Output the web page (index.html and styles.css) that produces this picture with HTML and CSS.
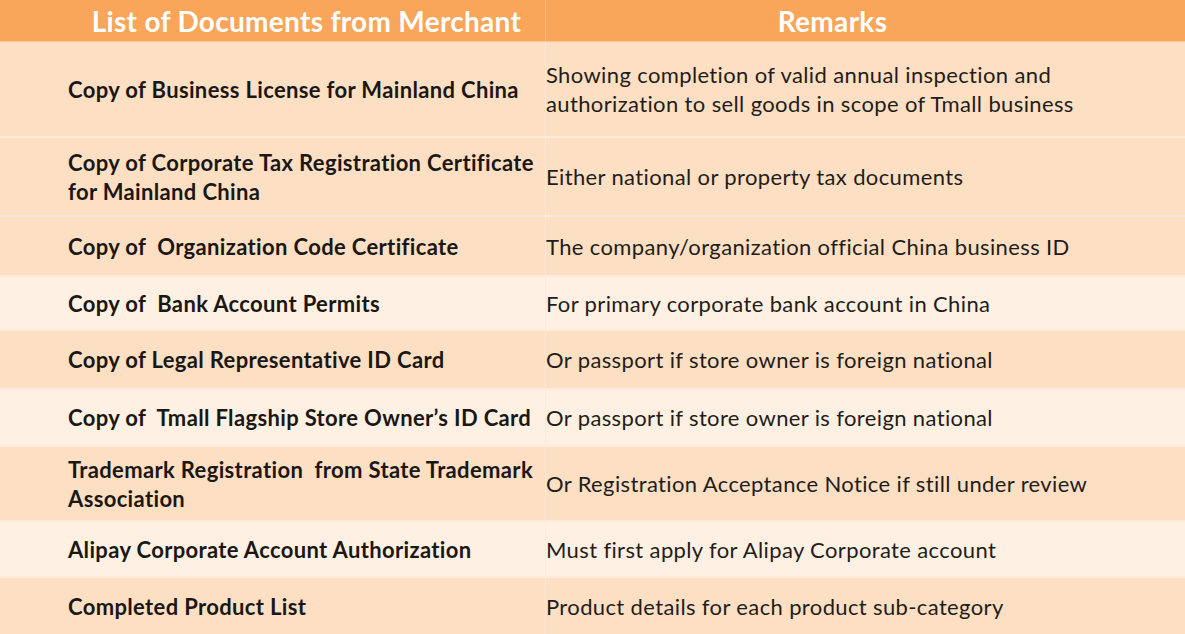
FILE: index.html
```html
<!DOCTYPE html>
<html lang="en">
<head>
<meta charset="utf-8">
<title>List of Documents from Merchant</title>
<link rel="stylesheet" href="styles.css">
</head>
<body>
<div class="table">
  <div class="row head">
    <div class="cell doc-h">List of Documents from Merchant</div>
    <div class="cell rem-h">Remarks</div>
  </div>
  <div class="row dark h96">
    <div class="cell doc">Copy of Business License for Mainland China</div>
    <div class="cell rem">Showing completion of valid annual inspection and<br>authorization to sell goods in scope of Tmall business</div>
  </div>
  <div class="row dark h79">
    <div class="cell doc">Copy of Corporate Tax Registration Certificate<br>for Mainland China</div>
    <div class="cell rem">Either national or property tax documents</div>
  </div>
  <div class="row dark h60">
    <div class="cell doc">Copy of &nbsp;Organization Code Certificate</div>
    <div class="cell rem">The company/organization official China business ID</div>
  </div>
  <div class="row light h54">
    <div class="cell doc">Copy of &nbsp;Bank Account Permits</div>
    <div class="cell rem">For primary corporate bank account in China</div>
  </div>
  <div class="row dark h59">
    <div class="cell doc">Copy of Legal Representative ID Card</div>
    <div class="cell rem">Or passport if store owner is foreign national</div>
  </div>
  <div class="row light h57">
    <div class="cell doc">Copy of &nbsp;Tmall Flagship Store Owner’s ID Card</div>
    <div class="cell rem">Or passport if store owner is foreign national</div>
  </div>
  <div class="row dark h75">
    <div class="cell doc">Trademark Registration &nbsp;from State Trademark<br>Association</div>
    <div class="cell rem">Or Registration Acceptance Notice if still under review</div>
  </div>
  <div class="row light h56">
    <div class="cell doc">Alipay Corporate Account Authorization</div>
    <div class="cell rem">Must first apply for Alipay Corporate account</div>
  </div>
  <div class="row dark h56 last">
    <div class="cell doc">Completed Product List</div>
    <div class="cell rem">Product details for each product sub-category</div>
  </div>
</div>
</body>
</html>
```

FILE: styles.css
```css
html, body {
  margin: 0;
  padding: 0;
  background: #fde0c6;
}

body {
  width: 1185px;
  height: 634px;
  overflow: hidden;
  font-family: "Lato", "Open Sans", sans-serif;
  color: #1b1714;
}

.table {
  display: flex;
  flex-direction: column;
}

.row {
  display: grid;
  grid-template-columns: 545px 1fr;
  box-sizing: border-box;
  border-bottom: 2px solid #feeadb;
}

.row.last {
  border-bottom: none;
}

.head {
  height: 42px;
  background: #f9a55a;
  border-bottom: 1px solid #fcc690;
}

.dark { background: #fddfc4; }
.light { background: #fef0e2; }

.h96 { height: 96px; }
.h79 { height: 79px; }
.h60 { height: 60px; }
.h54 { height: 54px; }
.h59 { height: 59px; }
.h57 { height: 57px; }
.h75 { height: 75px; }
.h56 { height: 56px; }

.cell {
  display: flex;
  align-items: center;
  box-sizing: border-box;
}

.doc-h, .rem-h {
  justify-content: center;
  color: #ffffff;
  font-weight: 700;
  font-size: 28px;
  letter-spacing: 0.3px;
}

.doc-h { padding-left: 68px; }

.rem-h {
  padding-right: 66px;
  border-left: 1px solid #fbb779;
}

.doc {
  padding-left: 68px;
  font-weight: 700;
  font-size: 22px;
  letter-spacing: 0.35px;
  line-height: 29px;
  white-space: nowrap;
}

.rem {
  padding-left: 0;
  border-left: 1px solid #feeadb;
  font-size: 22px;
  letter-spacing: 0.37px;
  line-height: 29px;
  color: #231d19;
  white-space: nowrap;
}
```
